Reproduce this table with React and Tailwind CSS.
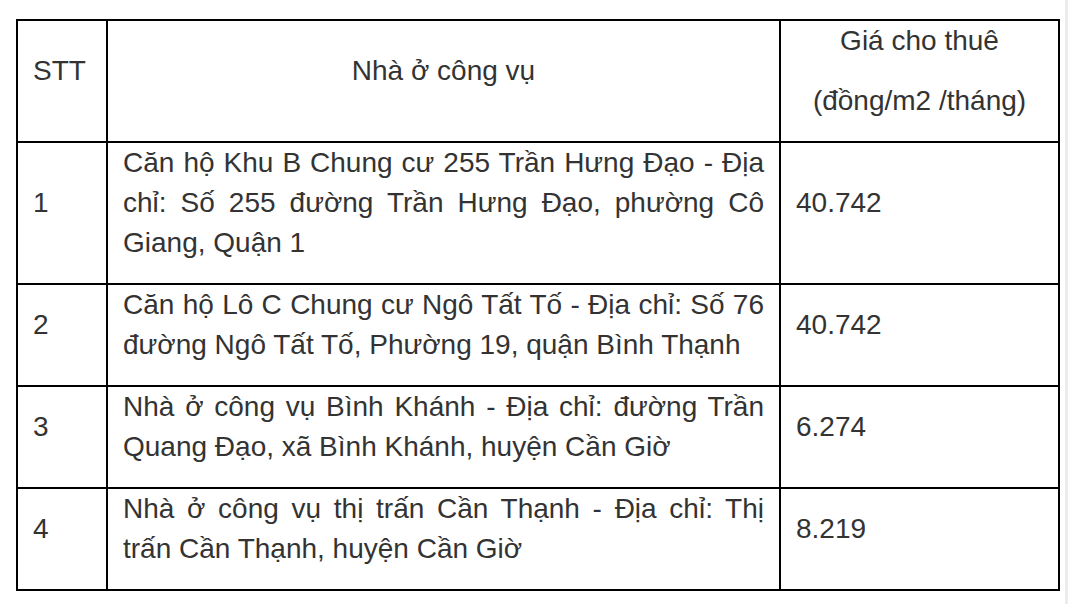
export default function App() {
  const rows = [
    ["1", "Căn hộ Khu B Chung cư 255 Trần Hưng Đạo - Địa chỉ: Số 255 đường Trần Hưng Đạo, phường Cô Giang, Quận 1", "40.742"],
    ["2", "Căn hộ Lô C Chung cư Ngô Tất Tố - Địa chỉ: Số 76 đường Ngô Tất Tố, Phường 19, quận Bình Thạnh", "40.742"],
    ["3", "Nhà ở công vụ Bình Khánh - Địa chỉ: đường Trần Quang Đạo, xã Bình Khánh, huyện Cần Giờ", "6.274"],
    ["4", "Nhà ở công vụ thị trấn Cần Thạnh - Địa chỉ: Thị trấn Cần Thạnh, huyện Cần Giờ", "8.219"],
  ];
  return (
    <div className="w-[1068px] h-[604px] bg-white relative overflow-hidden text-[#333] text-[28px] leading-[40px]" style={{ fontFamily: '"Liberation Sans", Arial, sans-serif' }}>
      <div className="absolute right-0 top-0 w-[3px] h-full bg-[#ececec]" />
      <div className="pt-[19px] pl-[16px]">
        <table className="border-collapse border-2 border-black w-[1042px] table-fixed">
          <colgroup>
            <col className="w-[90px]" />
            <col className="w-[673px]" />
            <col className="w-[279px]" />
          </colgroup>
          <tbody>
            <tr className="h-[122px]">
              <td className="border-2 border-black px-[15px] align-middle">
                <p className="mb-[20px]">STT</p>
              </td>
              <td className="border-2 border-black px-[15px] align-middle text-center">
                <p className="mb-[20px]">Nhà ở công vụ</p>
              </td>
              <td className="border-2 border-black px-[15px] align-middle text-center">
                <p className="mb-[20px]">Giá cho thuê</p>
                <p className="mb-[20px]">(đồng/m2 /tháng)</p>
              </td>
            </tr>
            {rows.map((r) => (
              <tr key={r[0]}>
                <td className="border-2 border-black px-[15px] align-middle">
                  <p className="mb-[20px]">{r[0]}</p>
                </td>
                <td className="border-2 border-black px-[15px] align-middle">
                  <p className="mb-[20px] text-justify">{r[1]}</p>
                </td>
                <td className="border-2 border-black px-[15px] align-middle">
                  <p className="mb-[20px]">{r[2]}</p>
                </td>
              </tr>
            ))}
          </tbody>
        </table>
      </div>
    </div>
  );
}
